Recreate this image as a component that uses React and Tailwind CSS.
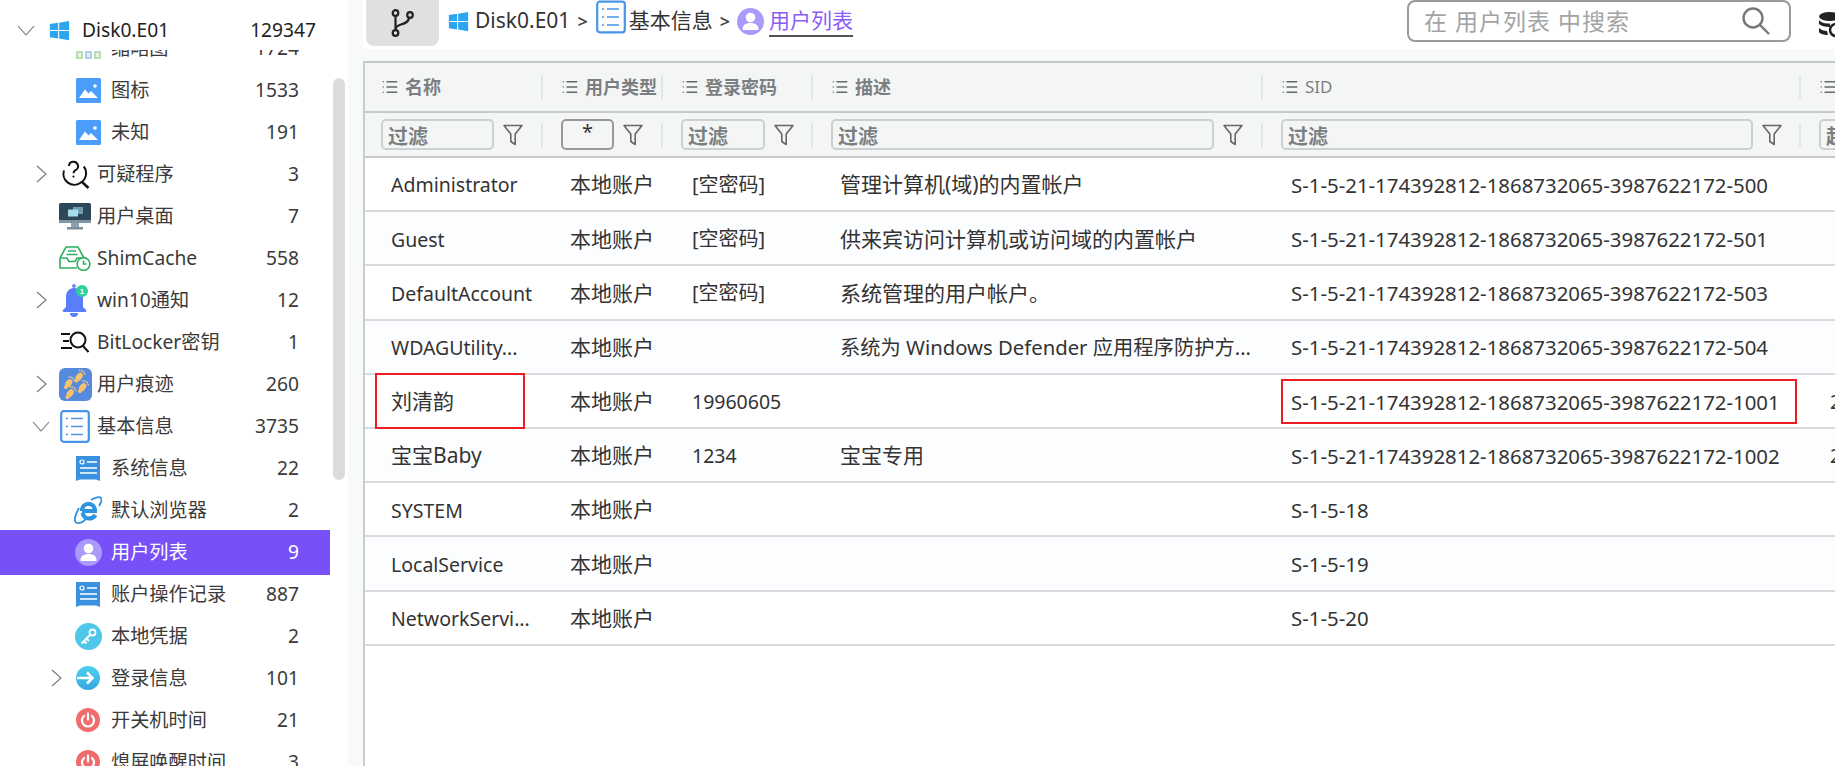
import { List } from 'lucide-react';

const WinLogo = ({ className }) => (
  <svg viewBox="0 0 24 24" className={className} fill="#2ba5f0">
    <path d="M1 4.6 10.4 3.2v8.3H1zM11.6 3 23 1.2v10.3H11.6zM1 12.7h9.4V21L1 19.6zM11.6 12.7H23V23l-11.4-1.8z" />
  </svg>
);

const ImageIcon = () => (
  <svg viewBox="0 0 25 25" className="h-[25px] w-[25px]">
    <rect width="25" height="25" rx="1.5" fill="#4a9df8" />
    <path d="M3 20 9 11.5l3.5 4 2.5-2.5 7 7z" fill="#fff" />
    <circle cx="19" cy="8" r="1.8" fill="#fff" />
  </svg>
);

const SuspectIcon = () => (
  <svg viewBox="0 0 30 30" className="h-[30px] w-[30px]" fill="none" stroke="#111" strokeWidth="2">
    <path d="M4 11.5a10.8 10.8 0 0 0 16.5 12.2 10.8 10.8 0 0 0 3.2-16.2" />
    <path d="m21.5 22.5 7 6.5" strokeWidth="2.4" />
    <path d="M9 7a4.5 4.5 0 1 1 6.5 4.2c-1.4.8-2 1.4-2 3" />
    <circle cx="13.5" cy="17.6" r="1.1" fill="#111" stroke="none" />
  </svg>
);

const DesktopIcon = () => (
  <svg viewBox="0 0 32 28" className="h-[28px] w-[32px]">
    <rect y="1" width="32" height="20" rx="1.5" fill="#2d4858" />
    <rect y="18" width="32" height="3" fill="#7f95a3" />
    <rect x="12" y="21" width="8" height="4" fill="#90a4ae" />
    <rect x="8" y="25" width="16" height="2.5" fill="#78909c" />
    <rect x="14" y="5" width="10" height="7" fill="#6f9fb5" />
    <rect x="9" y="7.5" width="10" height="7" fill="#a8dcec" />
  </svg>
);

const ShimIcon = () => (
  <svg viewBox="0 0 32 26" className="h-[26px] w-[32px]" fill="none" stroke="#2fae62" strokeWidth="1.6">
    <path d="M1 13 7 2h12l6 11" />
    <path d="M1 13h7l2 3.5h6l2-3.5h7" />
    <path d="M1 13v10h17" />
    <path d="M9 6h8M7.5 9.5h11" />
    <circle cx="24.5" cy="19" r="6.4" fill="#fff" />
    <path d="M24.5 15.5V19h3" />
  </svg>
);

const BellIcon = () => (
  <svg viewBox="0 0 28 34" className="h-[34px] w-[28px]">
    <circle cx="13" cy="3" r="2" fill="#6b8cf7" />
    <path d="M13 5c-5 0-8 4-8 9v10l-3 3c-1 1 0 2 1 2h21c1 0 2-1 1-2l-3-3V14c0-5-4-9-9-9z" fill="#5a7dfb" />
    <path d="M9 30h8a4 4 0 0 1-8 0z" fill="#5a7dfb" />
    <circle cx="21" cy="8" r="6" fill="#2fcf9f" />
    <text x="21" y="11" textAnchor="middle" fontSize="8" fontWeight="700" fill="#fff" fontFamily="Liberation Sans">1</text>
  </svg>
);

const BitlockerIcon = () => (
  <svg viewBox="0 0 28 22" className="h-[22px] w-[28px]" fill="none" stroke="#111" strokeWidth="2">
    <path d="M0 3h9M2 10h6M0 17h11" />
    <circle cx="17" cy="9" r="7.5" />
    <path d="m22 15 5.5 6" />
  </svg>
);

const Foot = ({ x, y }) => (
  <g transform={`translate(${x} ${y}) rotate(35)`} fill="#f7c26e">
    <ellipse cx="0" cy="1.5" rx="3" ry="4.6" />
    <ellipse cx="0" cy="6.6" rx="1.9" ry="1.7" />
    <circle cx="-3" cy="-4" r=".9" />
    <circle cx="-1" cy="-5" r=".9" />
    <circle cx="1" cy="-5" r=".9" />
    <circle cx="3" cy="-4" r=".9" />
  </g>
);

const FootIcon = () => (
  <svg viewBox="0 0 33 33" className="h-[33px] w-[33px]">
    <rect width="33" height="33" rx="6" fill="#568ade" />
    <Foot x={10.5} y={14} />
    <Foot x={12} y={24} />
    <Foot x={21} y={7.5} />
    <Foot x={24.5} y={18} />
  </svg>
);

const ListBoxIcon = ({ className }) => (
  <svg viewBox="0 0 30 33" className={className} fill="none" stroke="#4a94e8">
    <rect x="1.2" y="1.2" width="27.6" height="30.6" rx="2.5" strokeWidth="2.2" />
    <path d="M11 8.5h12M11 16.5h12M11 24.5h12M6 8.5h2M6 16.5h2M6 24.5h2" strokeWidth="1.6" />
  </svg>
);

const InfoIcon = () => (
  <svg viewBox="0 0 24 25" className="h-[25px] w-[24px]">
    <path d="M0 0h24v25l-4-1.6H4L0 25z" fill="#3a91e0" />
    <circle cx="6" cy="6" r="2" fill="none" stroke="#fff" strokeWidth="1.2" />
    <path d="M11 6h10M4 12h17M4 17h17" stroke="#fff" strokeWidth="1.4" />
  </svg>
);

const IeIcon = () => (
  <svg viewBox="0 0 28 28" className="h-[28px] w-[28px]" fill="none" stroke="#2f95df">
    <path d="M23 15H8M8 15c0-4.5 3-7.2 6.5-7.2S21 10.5 21 15M8.5 17c1 3.5 3.5 5.5 6.5 5.5 3 0 5-1.2 6.5-3.5" strokeWidth="4.2" />
    <path d="M5 12C1 19-1 26 3 27c3 .7 7-2 9-4M17 4c4-2.5 9-4 10-2 1 1.5 0 5-2 8" strokeWidth="1.8" />
  </svg>
);

const UserIcon = ({ className }) => (
  <svg viewBox="0 0 27 27" className={className}>
    <circle cx="13.5" cy="13.5" r="13.5" fill="#a99afb" />
    <circle cx="13.5" cy="9.5" r="4.8" fill="#fff" />
    <path d="M5.5 21c0-4 3.5-6 8-6s8 2 8 6c0 .7-.5 1-1 1H6.5c-.5 0-1-.3-1-1z" fill="#fff" />
  </svg>
);

const KeyIcon = () => (
  <svg viewBox="0 0 27 27" className="h-[27px] w-[27px]">
    <circle cx="13.5" cy="13.5" r="13.5" fill="#4ec7e8" />
    <circle cx="17.5" cy="9.5" r="3" fill="none" stroke="#fff" strokeWidth="1.8" />
    <path d="M15.5 11.5 6.5 20.5M9 18l2.5 2.5M11.5 15.5l2.5 2.5" stroke="#fff" strokeWidth="2" />
  </svg>
);

const LoginIcon = () => (
  <svg viewBox="0 0 24 24" className="h-[24px] w-[24px]">
    <defs>
      <linearGradient id="login" x1="0" y1="0" x2="0" y2="1">
        <stop offset="0" stopColor="#4dd0ee" />
        <stop offset="1" stopColor="#35a8e0" />
      </linearGradient>
    </defs>
    <circle cx="12" cy="12" r="12" fill="url(#login)" />
    <path d="M1 12h15M11 6.5l5.5 5.5-5.5 5.5" fill="none" stroke="#fff" strokeWidth="2.6" />
  </svg>
);

const PowerIcon = () => (
  <svg viewBox="0 0 24 24" className="h-[24px] w-[24px]" fill="none">
    <circle cx="12" cy="12" r="12" fill="#f16d6d" />
    <path d="M8 8a6 6 0 1 0 8 0M12 5.5v6" stroke="#fff" strokeWidth="2.2" strokeLinecap="round" />
  </svg>
);

const ThumbIcon = () => (
  <svg viewBox="0 0 25 25" className="h-[25px] w-[25px]">
    <rect x="0" y="15" width="7" height="8" fill="#bcdcb5" />
    <rect x="9" y="15" width="7" height="8" fill="#b5cdec" />
    <rect x="18" y="15" width="7" height="8" fill="#bcdcb5" />
    <rect x="2" y="17" width="3" height="4" fill="#e8f3e4" />
    <rect x="11" y="17" width="3" height="4" fill="#e4eefa" />
    <rect x="20" y="17" width="3" height="4" fill="#e8f3e4" />
  </svg>
);

const BranchIcon = () => (
  <svg viewBox="0 0 24 28" className="h-[28px] w-[24px]" fill="none" stroke="#222" strokeWidth="2.2">
    <circle cx="4.5" cy="4" r="2.8" />
    <circle cx="19" cy="6" r="2.8" />
    <circle cx="4.5" cy="24" r="2.8" />
    <path d="M4.5 7v14M18 9c-.5 4-4 5.5-8 6.5-3 .8-5 2-5.5 5" />
  </svg>
);

const FunnelIcon = () => (
  <svg viewBox="0 0 20 22" className="h-[22px] w-[20px] shrink-0" fill="none" stroke="#666" strokeWidth="1.6" strokeLinejoin="round">
    <path d="M1 1.5h18l-6.8 8.5v10.5l-4.4-3V10z" />
  </svg>
);

const ChevronRight = () => (
  <svg viewBox="0 0 11 18" className="h-[18px] w-[11px]" fill="none" stroke="#777" strokeWidth="1.1">
    <path d="m1 1 9 8-9 8" />
  </svg>
);

const ChevronDown = () => (
  <svg viewBox="0 0 18 11" className="h-[11px] w-[18px]" fill="none" stroke="#777" strokeWidth="1.1">
    <path d="m1 1 8 9 8-9" />
  </svg>
);

const Chevron = ({ state }) => {
  if (state === 'open') return <ChevronDown />;
  if (state === 'closed') return <ChevronRight />;
  return null;
};

const TreeRow = ({ level = 2, chevron, icon, label, count, active }) => (
  <div
    className={`flex w-[330px] items-center pr-[31px] ${
      active ? '-my-[1.5px] h-[45px] bg-[#7850f8] text-white' : 'h-[42px] text-[#3a3a3a]'
    } ${level === 1 ? 'pl-[29px]' : 'pl-[44px]'}`}
  >
    <div className="flex h-full w-[24px] items-center justify-center">
      <Chevron state={chevron} />
    </div>
    <div className={`ml-[4px] flex items-center justify-center ${level === 1 ? 'w-[36px]' : 'w-[32px]'}`}>{icon}</div>
    <span className={`whitespace-nowrap ${level === 1 ? 'ml-[4px]' : 'ml-[7px]'}`}>{label}</span>
    <span className="ml-auto">{count}</span>
  </div>
);

const tree = [
  { label: '缩略图', count: '1724', icon: <ThumbIcon /> },
  { label: '图标', count: '1533', icon: <ImageIcon /> },
  { label: '未知', count: '191', icon: <ImageIcon /> },
  { level: 1, chevron: 'closed', label: '可疑程序', count: '3', icon: <SuspectIcon /> },
  { level: 1, label: '用户桌面', count: '7', icon: <DesktopIcon /> },
  { level: 1, label: 'ShimCache', count: '558', icon: <ShimIcon /> },
  { level: 1, chevron: 'closed', label: 'win10通知', count: '12', icon: <BellIcon /> },
  { level: 1, label: 'BitLocker密钥', count: '1', icon: <BitlockerIcon /> },
  { level: 1, chevron: 'closed', label: '用户痕迹', count: '260', icon: <FootIcon /> },
  { level: 1, chevron: 'open', label: '基本信息', count: '3735', icon: <ListBoxIcon className="h-[33px] w-[30px]" /> },
  { label: '系统信息', count: '22', icon: <InfoIcon /> },
  { label: '默认浏览器', count: '2', icon: <IeIcon /> },
  { label: '用户列表', count: '9', icon: <UserIcon className="h-[27px] w-[27px]" />, active: true },
  { label: '账户操作记录', count: '887', icon: <InfoIcon /> },
  { label: '本地凭据', count: '2', icon: <KeyIcon /> },
  { chevron: 'closed', label: '登录信息', count: '101', icon: <LoginIcon /> },
  { label: '开关机时间', count: '21', icon: <PowerIcon /> },
  { label: '熄屏唤醒时间', count: '3', icon: <PowerIcon /> },
];

const columns = [
  { title: '名称', pl: 'pl-[16px]', filter: 'w-[113px]', bold: true, cell: 'pl-[26px]' },
  { title: '用户类型', pl: 'pl-[18px]', filter: 'w-[53px]', bold: true, value: '*', cell: 'pl-[27px]' },
  { title: '登录密码', pl: 'pl-[18px]', filter: 'w-[84px]', bold: true, cell: 'pl-[29px]' },
  { title: '描述', pl: 'pl-[18px]', filter: 'w-[383px]', bold: true, cell: 'pl-[27px]' },
  { title: 'SID', pl: 'pl-[18px]', filter: 'w-[472px]', cell: 'pl-[28px]' },
  { title: '', pl: 'pl-[18px]', filter: 'w-[40px]', last: true, cell: 'pl-[29px]' },
];

const sid = 'S-1-5-21-174392812-1868732065-3987622172-';

const rows = [
  ['Administrator', '本地账户', '[空密码]', '管理计算机(域)的内置帐户', sid + '500', ''],
  ['Guest', '本地账户', '[空密码]', '供来宾访问计算机或访问域的内置帐户', sid + '501', ''],
  ['DefaultAccount', '本地账户', '[空密码]', '系统管理的用户帐户。', sid + '503', ''],
  ['WDAGUtility...', '本地账户', '', '系统为 Windows Defender 应用程序防护方...', sid + '504', ''],
  ['刘清韵', '本地账户', '19960605', '', sid + '1001', '2'],
  ['宝宝Baby', '本地账户', '1234', '宝宝专用', sid + '1002', '2'],
  ['SYSTEM', '本地账户', '', '', 'S-1-5-18', ''],
  ['LocalService', '本地账户', '', '', 'S-1-5-19', ''],
  ['NetworkServi...', '本地账户', '', '', 'S-1-5-20', ''],
];

// latin runs are narrower than the CJK ones in this capture, so size by content
const cellSize = (text, col) => {
  if (col === 4) return 'text-[20.4px]';
  if (text.includes('Windows')) return 'text-[20.3px]';
  if (/[\u4e00-\u9fff]/.test(text)) return col === 2 ? 'text-[20px]' : 'text-[21px]';
  return 'text-[19.5px]';
};

const gridCols = 'grid grid-cols-[178px_120px_150px_450px_538px_1fr]';

const Separator = () => <div className="ml-auto h-[24px] w-[2px] shrink-0 bg-[#e3e6e6]" />;

const HeaderRow = () => (
  <div className={`${gridCols} h-[50px] border-t-2 border-[#c3c8ca] bg-[#f4f6f6]`}>
    {columns.map((c, i) => (
      <div key={i} className={`flex items-center overflow-hidden ${c.pl}`}>
        <List size={18} strokeWidth={1.8} className="mr-[6px] shrink-0 text-[#666a6c]" />
        <span className={`whitespace-nowrap text-[#7b7f81] ${c.bold ? 'text-[18px] font-bold' : 'text-[17px]'}`}>{c.title}</span>
        {!c.last && <Separator />}
      </div>
    ))}
  </div>
);

const FilterRow = () => (
  <div className={`${gridCols} h-[47px] border-y-2 border-[#c6cacc] bg-[#f4f6f6]`}>
    {columns.map((c, i) => (
      <div key={i} className={`flex items-center overflow-hidden ${i === 0 ? 'pl-[16px]' : 'pl-[18px]'}`}>
        <input
          readOnly
          value={c.value || ''}
          placeholder={c.last ? '起始' : '过滤'}
          className={`${c.filter} h-[31px] shrink-0 rounded-[5px] border-2 bg-[#f4f6f6] px-[5px] text-[20px] font-bold outline-none placeholder:text-[#7b7f81] ${
            c.value ? 'border-[#999] pb-[6px] text-center text-[18px] font-normal text-[#333]' : 'border-[#cdd0d2] pt-[3px]'
          }`}
        />
        {!c.last && (
          <div className="ml-[9px]">
            <FunnelIcon />
          </div>
        )}
        {!c.last && <Separator />}
      </div>
    ))}
  </div>
);

const TableRow = ({ row, index }) => (
  <div className={`${gridCols} h-[54.2px] border-b-2 border-[#d8dadd] ${index % 2 === 1 ? 'bg-[#fcfdff]' : 'bg-white'}`}>
    {row.map((cell, i) => (
      <div key={i} className={`relative flex min-w-0 items-center pt-[2px] ${columns[i].cell}`}>
        <span className={`whitespace-nowrap ${cellSize(cell, i)}`}>{cell}</span>
        {index === 4 && i === 0 && (
          <div className="absolute -top-[2px] left-[10px] h-[56px] w-[150px] border-2 border-[#f01c24]" />
        )}
        {index === 4 && i === 4 && (
          <div className="absolute top-[4px] left-[18px] h-[45px] w-[516px] border-2 border-[#f01c24]" />
        )}
      </div>
    ))}
  </div>
);

export default function App() {
  return (
    <div className="flex h-[766px] w-[1835px] overflow-hidden bg-[#f8f9f9] font-['Noto_Sans','Noto_Sans_CJK_SC',sans-serif] text-[19.2px] text-[#333]">
      <aside className="relative flex h-full w-[348px] shrink-0 flex-col bg-white">
        <div className="z-10 flex h-[50px] shrink-0 items-center bg-white pt-[10px] pr-[32px] pl-[17px] text-[#222]">
          <ChevronDown />
          <WinLogo className="ml-[14px] h-[21px] w-[21px]" />
          <span className="ml-[12px]">Disk0.E01</span>
          <span className="ml-auto">129347</span>
        </div>
        <div className="-mt-[23px] flex-1">
          {tree.map((item) => (
            <TreeRow key={item.label} {...item} />
          ))}
        </div>
        <div className="absolute top-[78px] left-[333px] h-[402px] w-[12px] rounded-full bg-[#dcdcdc]" />
      </aside>

      <main className="ml-[15px] flex min-w-0 flex-1 flex-col overflow-hidden">
        <header className="flex h-[49px] shrink-0 items-start bg-white pl-[3px] text-[21px]">
          <div className="flex h-[46px] w-[73px] items-center justify-center rounded-b-lg bg-[#e0e0e0]">
            <BranchIcon />
          </div>
          <nav className="ml-[9px] flex h-[42px] items-center">
            <WinLogo className="h-[21px] w-[21px]" />
            <span className="ml-[6px]">Disk0.E01</span>
            <span className="ml-[7px] text-[18px] font-semibold text-[#444]">&gt;</span>
            <ListBoxIcon className="mb-[8px] ml-[8px] h-[34px] w-[30px]" />
            <span className="ml-[3px]">基本信息</span>
            <span className="ml-[7px] text-[18px] font-semibold text-[#444]">&gt;</span>
            <UserIcon className="ml-[7px] h-[27px] w-[27px]" />
            <span className="ml-[5px] border-b-2 border-[#555] leading-[29px] text-[#8b5cf6]">用户列表</span>
          </nav>
          <div className="ml-auto flex h-[42px] w-[384px] items-center rounded-lg border-2 border-[#9a9a9a] pr-[18px] pl-[15px] text-[23px] text-[#a3a3a3]">
            <span className="tracking-[1px] whitespace-pre">在 用户列表 中搜索</span>
            <svg viewBox="0 0 30 28" className="ml-auto h-[28px] w-[30px]" fill="none" stroke="#777" strokeWidth="2.4">
              <circle cx="12" cy="11" r="9.5" />
              <path d="m19 18 9 9" />
            </svg>
          </div>
          <div className="mt-[12px] ml-[28px] h-[26px] w-[16px] shrink-0 overflow-hidden">
            <svg viewBox="0 0 22 26" className="h-[26px] w-[22px] max-w-none" fill="#222">
              <ellipse cx="11" cy="4.5" rx="11" ry="4.5" />
              <path d="M0 8c2 3 7 3.5 11 3.5V15C6 15 2 14 0 12zM0 16c2 2 5 3 8 3l1 4c-4 0-8-1-9-3z" />
              <circle cx="17" cy="18" r="6" fill="none" stroke="#222" strokeWidth="2.5" />
            </svg>
          </div>
        </header>

        <div className="mt-[12px] flex min-h-0 flex-1 flex-col border-l-2 border-[#c9cdcf] bg-white">
          <HeaderRow />
          <FilterRow />
          {rows.map((row, i) => (
            <TableRow key={row[0]} row={row} index={i} />
          ))}
        </div>
      </main>
    </div>
  );
}
